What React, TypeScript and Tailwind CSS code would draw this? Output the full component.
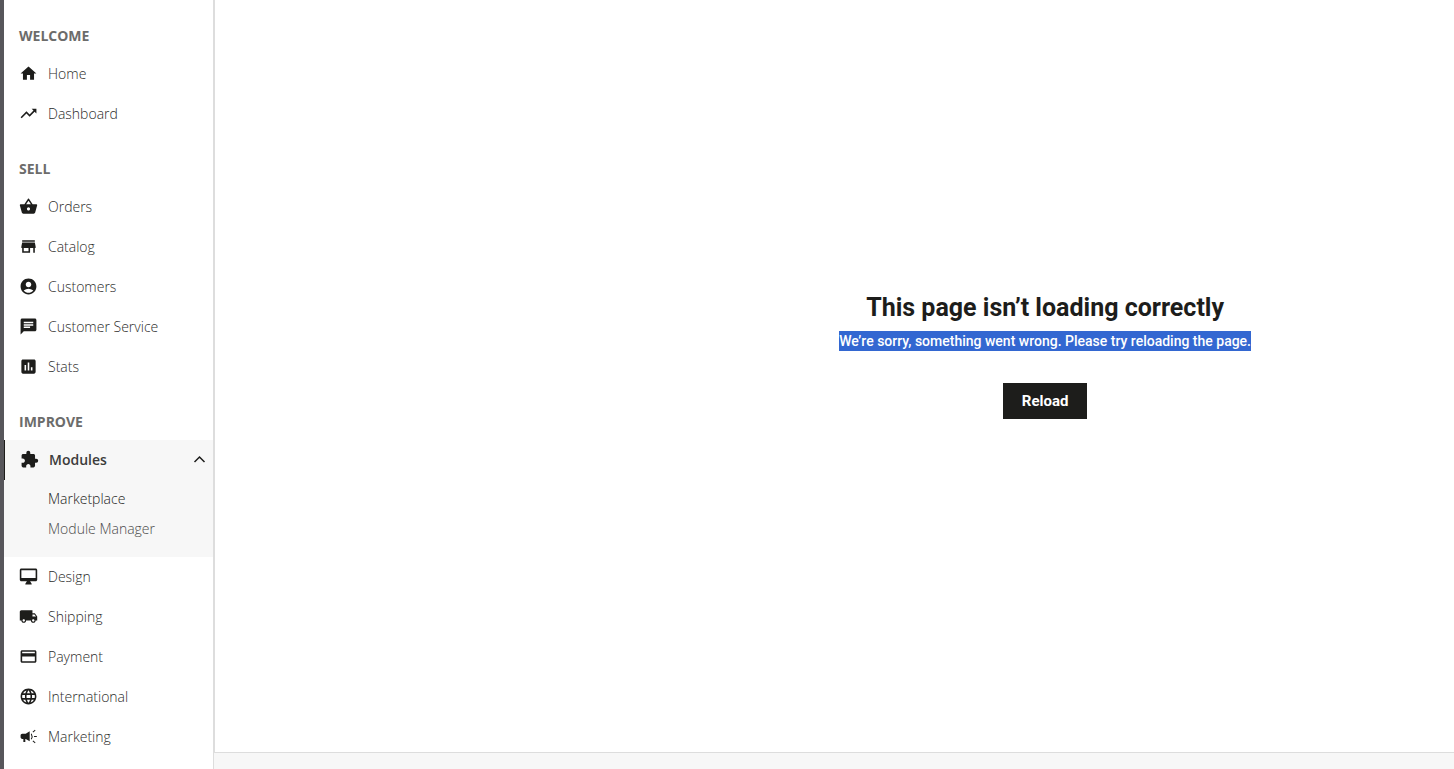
import type { IconType } from "react-icons";
import {
  MdAccountCircle,
  MdAssessment,
  MdChat,
  MdCreditCard,
  MdExtension,
  MdHome,
  MdLanguage,
  MdLocalShipping,
  MdShoppingBasket,
  MdStore,
  MdTrendingUp,
} from "react-icons/md";

function MegaphoneIcon({ className }: { className?: string }) {
  return (
    <svg viewBox="0 0 24 24" className={className} fill="currentColor" aria-hidden="true">
      <path d="M4 8.500h4.500l5-3v12.500l-5-3H8v4H5.500v-4H4c-1.100 0-2-.9-2-2V10.500c0-1.100.9-2 2-2z" />
      <path
        d="M15.500 8.500q2 3.500 0 7M17.500 6.500l3-2.500M19 12h3.500M17.500 17.500l3 2.500"
        fill="none"
        stroke="currentColor"
        strokeWidth="1.300"
      />
    </svg>
  );
}

function DesktopIcon({ className }: { className?: string }) {
  return (
    <svg viewBox="0 0 24 24" className={className} fill="currentColor" aria-hidden="true">
      <path d="M21 2H3c-1.100 0-2 .9-2 2v12c0 1.100.9 2 2 2h7l-2 3v1h8v-1l-2-3h7c1.100 0 2-.9 2-2V4c0-1.100-.9-2-2-2zm0 12H3V4h18v10z" />
    </svg>
  );
}

function ChevronUpIcon({ className }: { className?: string }) {
  return (
    <svg viewBox="0 0 20 20" className={className} fill="none" aria-hidden="true">
      <path d="M5.500 12l5-5 5 5" stroke="currentColor" strokeWidth="1.500" />
    </svg>
  );
}

type Icon = IconType | typeof MegaphoneIcon;
type Item = { label: string; icon: Icon; children?: string[] };
type Section = { title: string; items: Item[] };

const sections: Section[] = [
  {
    title: "WELCOME",
    items: [
      { label: "Home", icon: MdHome },
      { label: "Dashboard", icon: MdTrendingUp },
    ],
  },
  {
    title: "SELL",
    items: [
      { label: "Orders", icon: MdShoppingBasket },
      { label: "Catalog", icon: MdStore },
      { label: "Customers", icon: MdAccountCircle },
      { label: "Customer Service", icon: MdChat },
      { label: "Stats", icon: MdAssessment },
    ],
  },
  {
    title: "IMPROVE",
    items: [
      { label: "Modules", icon: MdExtension, children: ["Marketplace", "Module Manager"] },
      { label: "Design", icon: DesktopIcon },
      { label: "Shipping", icon: MdLocalShipping },
      { label: "Payment", icon: MdCreditCard },
      { label: "International", icon: MdLanguage },
      { label: "Marketing", icon: MegaphoneIcon },
    ],
  },
];

function NavItem({ item }: { item: Item }) {
  const ItemIcon = item.icon;
  if (item.children) {
    return (
      <li className="bg-[#f7f7f7] pb-[13px]">
        <a
          href="#modules"
          className="flex h-10 items-center gap-[10px] border-l border-[#1d1d1b] pr-1 pl-[15px] font-semibold text-[#3c3c3b]"
        >
          <ItemIcon className="mb-0.5 size-[19px] text-[#1d1d1b]" />
          <span className="flex-1">{item.label}</span>
          <ChevronUpIcon className="size-5 text-[#1d1d1b]" />
        </a>
        <ul className="pt-1 pl-11">
          {item.children.map((child, i) => (
            <li key={child}>
              <a
                href="#submenu"
                className={
                  i === 0
                    ? "flex h-[30px] items-center text-[#1d1d1b]"
                    : "flex h-[30px] items-center text-[#4c4c4b]"
                }
              >
                {child}
              </a>
            </li>
          ))}
        </ul>
      </li>
    );
  }
  return (
    <li>
      <a href="#page" className="flex h-10 items-center gap-[10px] pl-[15px] text-[#2c2c2b]">
        <ItemIcon className="mb-0.5 size-[19px] text-[#1d1d1b]" />
        {item.label}
      </a>
    </li>
  );
}

export default function App() {
  return (
    <div className="flex h-screen overflow-hidden bg-white font-['Open_Sans','Noto_Sans',sans-serif] text-[14px] leading-5 font-light">
      <div className="w-1 shrink-0 bg-[#57565b]" />
      <nav className="w-[210px] shrink-0 border-r border-[#dddddd] pt-[26px]">
        {sections.map((section) => (
          <section key={section.title} className="mb-[25px]">
            <h2 className="mb-2 pl-[15px] font-bold text-[#6c6c6b]">{section.title}</h2>
            <ul>
              {section.items.map((item) => (
                <NavItem key={item.label} item={item} />
              ))}
            </ul>
          </section>
        ))}
      </nav>
      <div className="flex min-w-0 flex-1 flex-col bg-[#f7f7f7]">
        <main className="flex-1 overflow-hidden border-b border-l border-[#dddddd] bg-white font-['Roboto','Noto_Sans',sans-serif]">
          <div className="flex w-[134%] flex-col items-center pt-[292px]">
            <h1 className="text-[25px] leading-8 font-bold text-[#1d1d1b]">
              This page isn’t loading correctly
            </h1>
            <p className="mt-[7px] mb-8 bg-[#3367d1] font-medium text-white">
              We’re sorry, something went wrong. Please try reloading the page.
            </p>
            <button
              type="button"
              className="h-9 min-w-[84px] bg-[#1d1d1b] px-4 text-[15px] font-bold text-white"
            >
              Reload
            </button>
          </div>
        </main>
        <footer className="h-4" />
      </div>
    </div>
  );
}
